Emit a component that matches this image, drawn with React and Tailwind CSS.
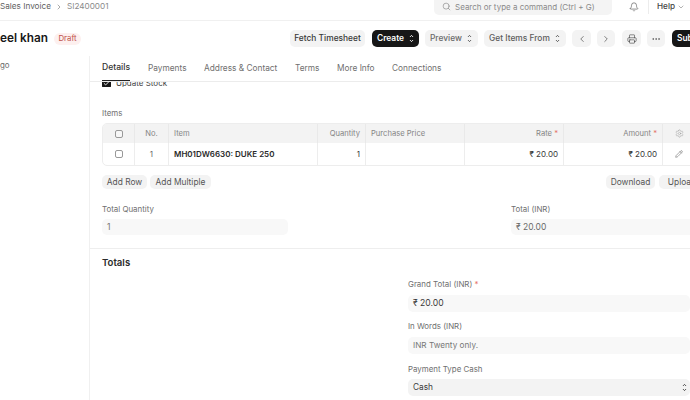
import React from "react";
import { Search, Bell, ChevronDown, ChevronLeft, ChevronRight, Printer, Ellipsis, Settings, Pencil, Check } from "lucide-react";

const Updown = ({ className = "" }) => (
  <svg width="7" height="11" viewBox="0 0 7 11" fill="none" stroke="currentColor" strokeWidth="1" strokeLinecap="round" strokeLinejoin="round" className={`shrink-0 ${className}`}>
    <path d="M2.3 3.6 3.5 2.4 4.7 3.6" />
    <path d="M2.3 7.4 3.5 8.6 4.7 7.4" />
  </svg>
);

const Btn = ({ children, className = "" }) => (
  <div className={`h-[17px] shrink-0 rounded-[5px] bg-[#f3f3f3] flex items-center text-[#383838] text-[8.4px] font-medium whitespace-nowrap ${className}`}>{children}</div>
);

const Cell = ({ w, className = "", children }) => (
  <div className={`shrink-0 h-full flex items-center border-r border-[#ededed] ${w} ${className}`}>{children}</div>
);

const Label = ({ children, className = "" }) => (
  <div className={`text-[7.9px] leading-[11px] text-[#6f6f6f] ${className}`}>{children}</div>
);

const Field = ({ children, className = "" }) => (
  <div className={`h-[17px] rounded-[5px] bg-[#f8f8f8] flex items-center px-[5px] text-[8.5px] text-[#6b6b6b] ${className}`}>{children}</div>
);

export default function App() {
  return (
    <div className="w-[690px] h-[400px] overflow-hidden bg-white flex flex-col font-['Inter',sans-serif]">
      {/* top bar */}
      <div className="h-[21px] shrink-0 border-b border-[#f0f0f0] flex items-start">
        <div className="w-[434px] h-[13px] shrink-0 flex items-center text-[8.2px] whitespace-nowrap">
          <span className="text-[#5f5f5f]">Sales Invoice</span>
          <ChevronRight size={8} className="mx-[4px] text-[#555]" strokeWidth={1.5} />
          <span className="text-[#8a8a8a]">SI2400001</span>
        </div>
        <div className="w-[178px] h-[15px] rounded-b-[5px] bg-[#f4f4f4] flex items-center pl-[8px] pb-[2px] text-[8px] text-[#8a8a8a] shrink-0">
          <Search size={9} className="mr-[4px] text-[#777]" strokeWidth={1.5} />
          <span className="whitespace-nowrap">Search or type a command (Ctrl + G)</span>
        </div>
        <div className="ml-[17px] h-[14px] flex items-center shrink-0">
          <Bell size={10} className="text-[#444]" strokeWidth={1.4} />
        </div>
        <div className="ml-[9px] w-px h-[14px] bg-[#ececec] shrink-0" />
        <div className="ml-[8px] h-[13px] flex items-center text-[8.2px] font-medium text-[#444] shrink-0">
          Help <ChevronDown size={8} className="ml-[2px] text-[#666]" strokeWidth={1.5} />
        </div>
      </div>

      {/* title row */}
      <div className="h-[35px] shrink-0 flex items-center">
        <div className="w-[54px] shrink-0 text-[11.8px] font-semibold text-[#171717] whitespace-nowrap leading-none">eel khan</div>
        <div className="w-[27px] shrink-0 h-[12px] justify-center rounded-[6px] bg-[#fdf0ef] text-[#c0504a] text-[7.8px] flex items-center">Draft</div>
        <Btn className="ml-[209px] w-[75px] justify-center">Fetch Timesheet</Btn>
        <Btn className="ml-[7px] w-[47px] !bg-[#171717] !text-white pl-[5px] justify-between pr-[4px] font-semibold">Create <Updown /></Btn>
        <Btn className="ml-[6px] w-[53px] pl-[5px] justify-between pr-[5px] !text-[#6a6a6a]">Preview <Updown className="text-[#555]" /></Btn>
        <Btn className="ml-[6px] w-[82px] pl-[5px] justify-between pr-[5px] !text-[#5c5c5c]">Get Items From <Updown className="text-[#555]" /></Btn>
        <Btn className="ml-[6px] w-[19px] justify-center"><ChevronLeft size={10} strokeWidth={1.5} /></Btn>
        <Btn className="ml-[6px] w-[18px] justify-center"><ChevronRight size={10} strokeWidth={1.5} /></Btn>
        <Btn className="ml-[7px] w-[19px] justify-center"><Printer size={10} strokeWidth={1.4} /></Btn>
        <Btn className="ml-[6px] w-[18px] justify-center"><Ellipsis size={10} strokeWidth={1.4} /></Btn>
        <Btn className="ml-[7px] w-[40px] !bg-[#171717] !text-white pl-[5px] font-semibold">Submit</Btn>
      </div>

      {/* body */}
      <div className="flex flex-1 min-h-0">
        <div className="w-[90px] shrink-0 border-r border-[#f0f0f0] pt-[4px] text-[7.9px] leading-[11px] text-[#6b6b6b]">go</div>
        <div className="flex-1 min-w-0 flex flex-col">
          {/* tabs */}
          <div className="h-[26px] shrink-0 border-b border-[#ececec] flex pl-[12px] text-[8.3px] text-[#6f6f6f]">
            <div className="relative w-[46px] pt-[5px] text-[8.6px] font-medium text-[#333]">
              Details
              <div className="absolute left-0 w-[28px] bottom-0 h-px bg-[#222]" />
            </div>
            <div className="w-[56px] pt-[6px]">Payments</div>
            <div className="w-[91px] pt-[6px] whitespace-nowrap">Address &amp; Contact</div>
            <div className="w-[42px] pt-[6px]">Terms</div>
            <div className="w-[55px] pt-[6px] whitespace-nowrap">More Info</div>
            <div className="pt-[6px]">Connections</div>
          </div>

          {/* clipped scroll area */}
          <div className="flex-1 min-h-0 overflow-hidden">
            <div className="h-[5px] overflow-hidden pl-[12px]">
              <div className="flex items-center -mt-[5px] text-[8px] text-[#444]">
                <div className="w-[9px] h-[9px] rounded-[2px] bg-[#171717] flex items-center justify-center mr-[5px]">
                  <Check size={7} color="white" strokeWidth={3} />
                </div>
                Update Stock
              </div>
            </div>

            <Label className="ml-[12px] mt-[21px]">Items</Label>

            {/* table */}
            <div className="ml-[12px] mt-[4px] w-[620px] h-[43px] rounded-[5px] border border-[#ededed] overflow-hidden">
              <div className="h-[19px] bg-[#f3f3f3] flex text-[7.6px] text-[#858585]">
                <Cell w="w-[32px]" className="justify-center !border-[#e9e9e9]"><div className="w-[8px] h-[8px] rounded-[2px] border border-[#999] bg-[#f7f7f7]" /></Cell>
                <Cell w="w-[34px]" className="justify-center !border-[#e9e9e9]">No.</Cell>
                <Cell w="w-[149px]" className="pl-[5px] !border-[#e9e9e9]">Item</Cell>
                <Cell w="w-[48px]" className="justify-end pr-[5px] !border-[#e9e9e9]">Quantity</Cell>
                <Cell w="w-[99px]" className="pl-[5px] !border-[#e9e9e9] whitespace-nowrap">Purchase Price</Cell>
                <Cell w="w-[99px]" className="justify-end pr-[5px] !border-[#e9e9e9]">Rate&nbsp;<span className="text-[#e57368]">*</span></Cell>
                <Cell w="w-[99px]" className="justify-end pr-[5px] !border-[#e9e9e9]">Amount&nbsp;<span className="text-[#e57368]">*</span></Cell>
                <div className="flex-1 flex items-center pl-[12px]"><Settings size={9} className="text-[#999]" strokeWidth={1.3} /></div>
              </div>
              <div className="h-[22px] flex text-[8px] text-[#383838]">
                <Cell w="w-[32px]" className="justify-center"><div className="w-[8px] h-[8px] rounded-[2px] border border-[#999]" /></Cell>
                <Cell w="w-[34px]" className="justify-center text-[#666]">1</Cell>
                <Cell w="w-[149px]" className="pl-[5px] font-semibold text-[#2a2a2a] whitespace-nowrap">MH01DW6630: DUKE 250</Cell>
                <Cell w="w-[48px]" className="justify-end pr-[5px]">1</Cell>
                <Cell w="w-[99px]" />
                <Cell w="w-[99px]" className="justify-end pr-[5px]">₹ 20.00</Cell>
                <Cell w="w-[99px]" className="justify-end pr-[5px]">₹ 20.00</Cell>
                <div className="flex-1 flex items-center pl-[12px]"><Pencil size={8} className="text-[#555]" strokeWidth={1.5} /></div>
              </div>
            </div>

            {/* grid buttons */}
            <div className="ml-[12px] mt-[9px] flex">
              <Btn className="!h-[14px] w-[45px] justify-center text-[8.2px] !font-normal !text-[#555]">Add Row</Btn>
              <Btn className="!h-[14px] ml-[3px] w-[61px] justify-center text-[8.2px] !font-normal !text-[#555]">Add Multiple</Btn>
              <Btn className="!h-[14px] ml-[395px] w-[49px] justify-center text-[8.2px] !font-normal !text-[#555]">Download</Btn>
              <Btn className="!h-[14px] ml-[4px] w-[46px] justify-center text-[8.2px] !font-normal !text-[#555]">Upload</Btn>
            </div>

            {/* totals qty */}
            <div className="ml-[12px] mt-[15px] flex">
              <div className="w-[186px] shrink-0">
                <Label>Total Quantity</Label>
                <Field className="mt-[4px] !h-[16px] text-[#777]">1</Field>
              </div>
              <div className="ml-[223px] w-[200px] shrink-0">
                <Label>Total (INR)</Label>
                <Field className="mt-[4px] !h-[16px]">₹ 20.00</Field>
              </div>
            </div>

            <div className="mt-[13px] border-t border-[#eeeeee]" />

            <div className="ml-[12px] mt-[7px] text-[9.6px] leading-[13px] font-semibold text-[#2a2a2a]">Totals</div>

            <div className="ml-[318px] w-[282px] mt-[10px]">
              <Label>Grand Total (INR) <span className="text-[#e57368]">*</span></Label>
              <Field className="mt-[5px] !text-[#3a3a3a] !text-[8.6px]">₹ 20.00</Field>
              <Label className="mt-[9px]">In Words (INR)</Label>
              <Field className="mt-[5px] !text-[#777] !text-[8.2px]">INR Twenty only.</Field>
              <Label className="mt-[10px]">Payment Type Cash</Label>
              <div className="mt-[4px] h-[17px] rounded-[5px] bg-[#f3f3f3] flex items-center pl-[5px] pr-[2px] justify-between text-[8.3px] text-[#3a3a3a]">
                Cash <Updown className="text-[#444]" />
              </div>
            </div>
          </div>
        </div>
      </div>
    </div>
  );
}
